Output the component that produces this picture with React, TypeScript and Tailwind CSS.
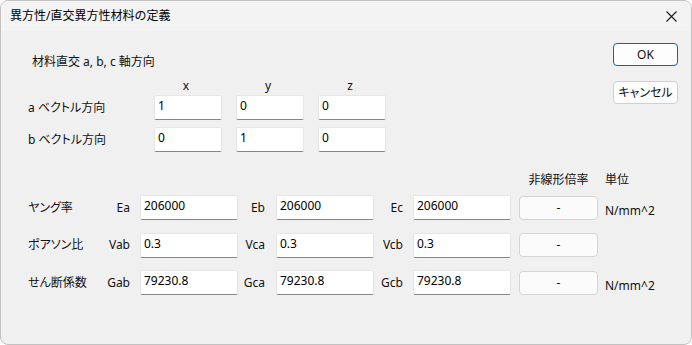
import React from 'react';

const font = { fontFamily: '"Noto Sans", "Noto Sans CJK JP", sans-serif' };

function Field({ value, className = '' }: { value: string; className?: string }) {
  return (
    <div
      className={`h-[25px] bg-white border border-[#e6e6e6] border-b-[#868686] rounded-[2px] pl-[3px] pt-[1px] text-[12px] leading-[18px] text-black ${className}`}
    >
      {value}
    </div>
  );
}

function DashButton() {
  return (
    <div className="ml-[8px] w-[79px] h-[24px] rounded-[4px] border border-[#d4d4d4] bg-[#fbfbfb] flex items-center justify-center text-[12px]">
      -
    </div>
  );
}

const vectors = [
  { label: 'a ベクトル方向', values: ['1', '0', '0'] },
  { label: 'b ベクトル方向', values: ['0', '1', '0'] },
];

const props = [
  { name: 'ヤング率', cells: [['Ea', '206000'], ['Eb', '206000'], ['Ec', '206000']], unit: 'N/mm^2' },
  { name: 'ポアソン比', cells: [['Vab', '0.3'], ['Vca', '0.3'], ['Vcb', '0.3']], unit: '' },
  { name: 'せん断係数', cells: [['Gab', '79230.8'], ['Gca', '79230.8'], ['Gcb', '79230.8']], unit: 'N/mm^2' },
];

const labelPad = ['pr-[10px]', 'pr-[11px]', 'pr-[10px]'];

export default function App() {
  return (
    <div style={font} className="w-[692px] h-[345px] bg-white text-[#111]">
      <div className="w-full h-full flex flex-col rounded-[8px] border border-[#c2c2c2] overflow-hidden bg-[#f0f0f0]">
        {/* Title bar */}
        <div className="h-[30px] shrink-0 bg-[#f3f3f3] flex items-center justify-between pl-[9px] pr-[12px]">
          <span className="text-[12px] text-black">異方性/直交異方性材料の定義</span>
          <svg width="11" height="11" viewBox="0 0 11 11" className="mr-[2px]">
            <path d="M0.5 0.5 L10.5 10.5 M10.5 0.5 L0.5 10.5" stroke="#1a1a1a" strokeWidth="1.1" />
          </svg>
        </div>

        <div className="flex-1 flex flex-col [font-feature-settings:'palt']">
          {/* Top section */}
          <div className="flex justify-between">
            <div className="pl-[27px] pt-[23px] text-[12px]">
              <div className="pl-[4px] h-[16px] leading-[16px]">材料直交 a, b, c 軸方向</div>
              <div className="mt-[9px] grid grid-cols-[112px_68px_68px_68px] gap-x-[14px] h-[16px] leading-[14px]">
                <div />
                <div className="text-center -translate-x-[2px]">x</div>
                <div className="text-center -translate-x-[2px]">y</div>
                <div className="text-center -translate-x-[2px]">z</div>
              </div>
              <div className="grid grid-cols-[112px_68px_68px_68px] gap-x-[14px] grid-rows-[25px_25px] gap-y-[7px]">
                {vectors.map((v) => (
                  <React.Fragment key={v.label}>
                    <div className="flex items-center">{v.label}</div>
                    {v.values.map((val, i) => (
                      <Field key={i} value={val} />
                    ))}
                  </React.Fragment>
                ))}
              </div>
            </div>
            <div className="pt-[12px] pr-[13px] flex flex-col gap-[15px] text-[12px]">
              <div className="w-[65px] h-[23px] rounded-[4px] border border-[#0067c0] bg-[#fdfdfd] flex items-center justify-center">
                OK
              </div>
              <div className="w-[65px] h-[23px] rounded-[4px] border border-[#d0d0d0] bg-[#fdfdfd] flex items-center justify-center">
                キャンセル
              </div>
            </div>
          </div>

          {/* Material properties */}
          <div className="pl-[27px] mt-[20px] text-[12px]">
            <div className="grid grid-cols-[76px_36px_98px_38px_98px_39px_98px_87px_auto] h-[16px] leading-[16px] mb-[7px]">
              <div className="col-start-8 pl-[8px] text-center">非線形倍率</div>
              <div className="pl-[7px]">単位</div>
            </div>
            <div className="grid grid-cols-[76px_36px_98px_38px_98px_39px_98px_87px_auto] grid-rows-[25px_25px_25px] gap-y-[12.5px]">
              {props.map((p) => (
                <React.Fragment key={p.name}>
                  <div className="flex items-center">{p.name}</div>
                  {p.cells.map(([lab, val], i) => (
                    <React.Fragment key={lab}>
                      <div className={`flex items-center justify-end ${labelPad[i]}`}>{lab}</div>
                      <Field value={val} />
                    </React.Fragment>
                  ))}
                  <div className="flex items-center">
                    <DashButton />
                  </div>
                  <div className="pl-[7px] flex items-center pt-[6px]">{p.unit}</div>
                </React.Fragment>
              ))}
            </div>
          </div>
        </div>
      </div>
    </div>
  );
}
